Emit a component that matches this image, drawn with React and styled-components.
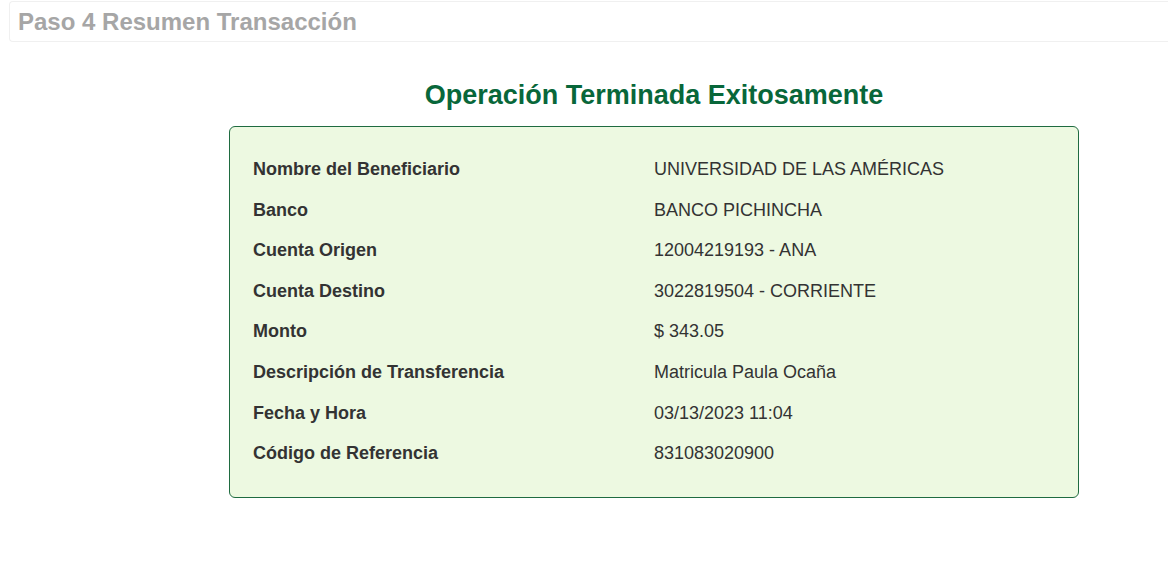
import React from "react";
import styled, { createGlobalStyle } from "styled-components";

const GlobalStyle = createGlobalStyle`
  body {
    margin: 0;
    background: #fff;
    font-family: "Liberation Sans", Arial, sans-serif;
  }
`;

const Page = styled.main`
  padding: 1px 0 0 9px;
`;

const StepHeader = styled.header`
  border: 1px solid #f0f0f0;
  border-right: none;
  border-radius: 4px 0 0 4px;
  height: 39px;
  padding: 0 8px;
  display: flex;
  align-items: center;
`;

const StepTitle = styled.h2`
  margin: 0;
  font-size: 24px;
  font-weight: bold;
  color: #a6a6a6;
`;

const Content = styled.section`
  width: 850px;
  margin: 36px 0 0 220px;
`;

const Title = styled.h1`
  margin: 0 0 14px;
  text-align: center;
  font-size: 27px;
  line-height: 34px;
  font-weight: bold;
  color: #08673a;
`;

const Card = styled.div`
  background: #edf9e1;
  border: 1px solid #1f6b40;
  border-radius: 6px;
  padding: 22px 0 23px;
`;

const Row = styled.div`
  display: grid;
  grid-template-columns: 1fr 1fr;
  line-height: 20.6px;
  padding: 10px 0;
  font-size: 18px;
  color: #333;
`;

const Label = styled.span`
  font-weight: bold;
  padding-left: 23px;
`;

const Value = styled.span`
  padding-left: 0;
`;

const rows = [
  ["Nombre del Beneficiario", "UNIVERSIDAD DE LAS AMÉRICAS"],
  ["Banco", "BANCO PICHINCHA"],
  ["Cuenta Origen", "12004219193 - ANA"],
  ["Cuenta Destino", "3022819504 - CORRIENTE"],
  ["Monto", "$ 343.05"],
  ["Descripción de Transferencia", "Matricula Paula Ocaña"],
  ["Fecha y Hora", "03/13/2023 11:04"],
  ["Código de Referencia", "831083020900"],
];

export default function App() {
  return (
    <>
      <GlobalStyle />
      <Page>
        <StepHeader>
          <StepTitle>Paso 4 Resumen Transacción</StepTitle>
        </StepHeader>
        <Content>
          <Title>Operación Terminada Exitosamente</Title>
          <Card>
            {rows.map(([label, value]) => (
              <Row key={label}>
                <Label>{label}</Label>
                <Value>{value}</Value>
              </Row>
            ))}
          </Card>
        </Content>
      </Page>
    </>
  );
}
